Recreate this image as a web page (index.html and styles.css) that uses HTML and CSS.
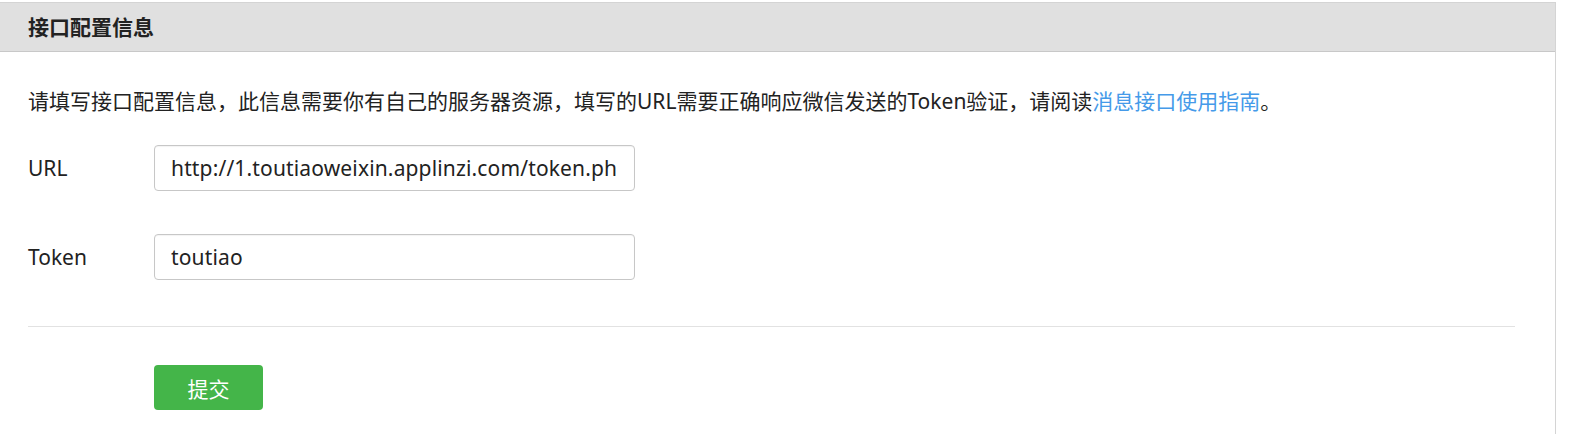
FILE: index.html
```html
<!DOCTYPE html>
<html lang="zh-CN">
<head>
  <meta charset="UTF-8">
  <title>接口配置信息</title>
  <link rel="stylesheet" href="styles.css">
</head>
<body>
  <div class="panel">
    <div class="panel-head">接口配置信息</div>
    <div class="panel-body">
      <p class="desc">请填写接口配置信息，此信息需要你有自己的服务器资源，填写的URL需要正确响应微信发送的Token验证，请阅读<a href="#">消息接口使用指南</a>。</p>

      <div class="form-row">
        <label for="url">URL</label>
        <input type="text" id="url" value="http://1.toutiaoweixin.applinzi.com/token.php">
      </div>
      <div class="form-row">
        <label for="token">Token</label>
        <input type="text" id="token" value="toutiao">
      </div>

      <div class="actions">
        <button class="submit-btn">提交</button>
      </div>
    </div>
  </div>
</body>
</html>
```

FILE: styles.css
```css
:root {
  --green: #44b549;
  --link: #459ae9;
}

body {
  margin: 0;
  padding: 2px 0 0;
  background: #fff;
  color: #222;
  font-family: "Noto Sans", "Noto Sans CJK SC", sans-serif;
}

.panel {
  width: 1555px;
  border-top: 1px solid #d4d4d4;
  border-right: 1px solid #d4d4d4;
}

.panel-head {
  height: 48px;
  line-height: 48px;
  padding-left: 28px;
  background: #e0e0e0;
  border-bottom: 1px solid #c8c8c8;
  font-size: 21px;
  font-weight: bold;
  color: #222;
}

.panel-body {
  padding: 0 40px 0 28px;
}

.desc {
  margin: 0;
  padding: 34px 0 0;
  font-size: 21px;
  line-height: 30px;
  color: #222;
}

.desc a {
  color: var(--link);
  text-decoration: none;
}

.form-row {
  display: flex;
  align-items: center;
  margin-top: 29px;
}

.form-row + .form-row {
  margin-top: 43px;
}

.form-row label {
  width: 126px;
  font-size: 21px;
}

.form-row input {
  box-sizing: border-box;
  width: 481px;
  height: 46px;
  padding: 0 16px;
  border: 1px solid #c7c7c7;
  border-radius: 4px;
  font-family: inherit;
  font-size: 21px;
  letter-spacing: 0.15px;
  color: #222;
  box-shadow: inset 0 1px 1px rgba(0,0,0,0.05);
}

.actions {
  margin-top: 46px;
  border-top: 1px solid #e2e2e2;
  padding: 38px 0 28px 126px;
}

.submit-btn {
  width: 109px;
  height: 45px;
  border: none;
  border-radius: 4px;
  background: var(--green);
  color: #fff;
  font-family: inherit;
  font-size: 21px;
  cursor: pointer;
}
```
